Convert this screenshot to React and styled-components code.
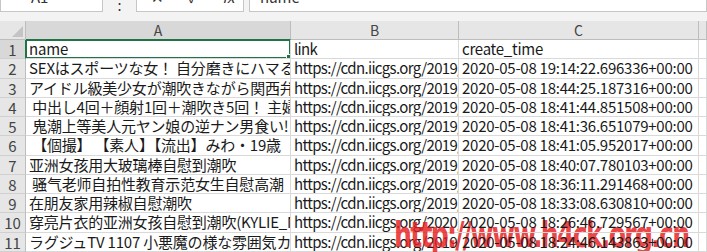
import React from 'react';
import styled, { createGlobalStyle } from 'styled-components';

const GlobalStyle = createGlobalStyle`
  html, body {
    margin: 0;
    padding: 0;
    background: #fff;
    overflow: hidden;
  }
  body {
    font-family: "Noto Sans CJK JP", "Noto Sans CJK SC", sans-serif;
  }
`;

const Page = styled.div`
  width: 707px;
  height: 252px;
  position: relative;
  overflow: hidden;
  background: #fff;
`;

const FormulaBar = styled.div`
  height: 21px;
  background: #f3f3f3;
  display: flex;
  align-items: flex-start;
  box-sizing: border-box;
`;

const BarBox = styled.div`
  width: ${props => props.width || 'auto'};
  flex: ${props => (props.grow ? 1 : 'none')};
  margin-left: ${props => props.gap || 0}px;
  height: 12px;
  background: #fff;
  border: 1px solid #c6c6c6;
  border-top: none;
  box-sizing: border-box;
  overflow: hidden;
  display: flex;
  align-items: flex-end;
  gap: 24px;
  padding: 0 0 0 ${props => props.pad || 8}px;
`;

const BarText = styled.span`
  font-size: 15px;
  line-height: 15px;
  color: #333;
  margin-bottom: 7px;
`;

const BarDots = styled.div`
  width: 33px;
  height: 12px;
  display: flex;
  justify-content: center;
  overflow: hidden;
  color: #777;
  font-size: 15px;
  line-height: 0;
`;

const Sheet = styled.div`
  display: grid;
  grid-template-columns: 26px 265px 168px 240px 1fr;
  grid-template-rows: 19px repeat(11, 19.25px);
`;

const Corner = styled.div`
  background: #e6e6e6;
  border-right: 1px solid #bdbdbd;
  border-bottom: 1px solid #bdbdbd;
  box-sizing: border-box;
  position: relative;
  &::after {
    content: '';
    position: absolute;
    right: 2px;
    bottom: 2px;
    border-style: solid;
    border-width: 0 0 11px 11px;
    border-color: transparent transparent #c4c4c4 transparent;
  }
`;

const ColHead = styled.div`
  background: ${props => (props.active ? '#d8d8d8' : '#e6e6e6')};
  border-right: 1px solid #bdbdbd;
  border-bottom: 1px solid ${props => (props.active ? '#217346' : '#bdbdbd')};
  box-sizing: border-box;
  font-size: 14px;
  line-height: 18px;
  color: #444;
  text-align: center;
`;

const RowHead = styled.div`
  background: ${props => (props.active ? '#d8d8d8' : '#e6e6e6')};
  border-right: 1px solid ${props => (props.active ? '#217346' : '#bdbdbd')};
  border-bottom: 1px solid #d0d0d0;
  box-sizing: border-box;
  font-size: 15px;
  line-height: 19px;
  color: #444;
  text-align: center;
`;

const Cell = styled.div`
  border-right: 1px solid #d9d9d9;
  border-bottom: 1px solid #d9d9d9;
  box-sizing: border-box;
  font-size: 15px;
  line-height: 18px;
  color: #1a1a1a;
  white-space: pre;
  letter-spacing: ${props => props.tight || 0}px;
  overflow: ${props => (props.spill ? 'visible' : 'hidden')};
  padding-left: 3px;
  position: relative;
  z-index: ${props => (props.spill ? 1 : 0)};
  background: ${props => (props.spill ? 'transparent' : '#fff')};

  ${props => props.selected && `
    &::after {
      content: '';
      position: absolute;
      left: -1px;
      top: -1px;
      right: -1px;
      bottom: -1px;
      border: 2px solid #217346;
      pointer-events: none;
    }
    &::before {
      content: '';
      position: absolute;
      right: -3px;
      bottom: -3px;
      width: 5px;
      height: 5px;
      background: #217346;
      border: 1px solid #fff;
      z-index: 2;
    }
  `}
`;

const Watermark = styled.div`
  position: absolute;
  left: 394px;
  top: 215px;
  font-family: "DejaVu Sans Condensed", "DejaVu Sans", sans-serif;
  font-weight: bold;
  font-size: 35px;
  letter-spacing: -2.2px;
  color: rgba(232, 28, 32, 0.84);
  white-space: nowrap;
  transform: scaleX(0.8);
  transform-origin: left top;
`;

const rows = [
  ['name', 'link', 'create_time'],
  ['SEXはスポーツな女！ 自分磨きにハマる美人OL', 'https://cdn.iicgs.org/2019/05/08/a1.mp4', '2020-05-08 19:14:22.696336+00:00'],
  ['アイドル級美少女が潮吹きながら関西弁で', 'https://cdn.iicgs.org/2019/05/08/a2.mp4', '2020-05-08 18:44:25.187316+00:00'],
  [' 中出し4回＋顔射1回＋潮吹き5回！ 主婦', 'https://cdn.iicgs.org/2019/05/08/a3.mp4', '2020-05-08 18:41:44.851508+00:00'],
  [' 鬼潮上等美人元ヤン娘の逆ナン男食い!', 'https://cdn.iicgs.org/2019/05/08/a4.mp4', '2020-05-08 18:41:36.651079+00:00'],
  [' 【個撮】 【素人】【流出】みわ・19歳 ', 'https://cdn.iicgs.org/2019/05/08/a5.mp4', '2020-05-08 18:41:05.952017+00:00'],
  ['亚洲女孩用大玻璃棒自慰到潮吹', 'https://cdn.iicgs.org/2019/05/08/a6.mp4', '2020-05-08 18:40:07.780103+00:00'],
  [' 骚气老师自拍性教育示范女生自慰高潮', 'https://cdn.iicgs.org/2019/05/08/a7.mp4', '2020-05-08 18:36:11.291468+00:00'],
  ['在朋友家用辣椒自慰潮吹', 'https://cdn.iicgs.org/2019/05/08/a8.mp4', '2020-05-08 18:33:08.630810+00:00'],
  ['穿亮片衣的亚洲女孩自慰到潮吹(KYLIE_N', 'https://cdn.iicgs.org/2020/05/08/a9.mp4', '2020-05-08 18:26:46.729567+00:00'],
  ['ラグジュTV 1107 小悪魔の様な雰囲気カ', 'https://cdn.iicgs.org/2019/05/08/b0.mp4', '2020-05-08 18:24:46.143863+00:00'],
];

function App() {
  return (
    <Page>
      <GlobalStyle />
      <FormulaBar>
        <BarBox width="103px" pad={30}><BarText>A1</BarText></BarBox>
        <BarDots><BarText>⋮</BarText></BarDots>
        <BarBox width="108px" pad={14}>
          <BarText>✕</BarText>
          <BarText>✓</BarText>
          <BarText><i>fx</i></BarText>
        </BarBox>
        <BarBox grow gap={5} pad={10}><BarText>name</BarText></BarBox>
      </FormulaBar>
      <Sheet>
        <Corner />
        <ColHead active>A</ColHead>
        <ColHead>B</ColHead>
        <ColHead>C</ColHead>
        <ColHead />
        {rows.map((row, i) => (
          <React.Fragment key={i}>
            <RowHead active={i === 0}>{i + 1}</RowHead>
            <Cell selected={i === 0} tight={-0.2}>{row[0]}</Cell>
            <Cell tight={-0.65}>{row[1]}</Cell>
            <Cell spill tight={-0.25}>{row[2]}</Cell>
            <Cell />
          </React.Fragment>
        ))}
      </Sheet>
      <Watermark>http://www.h4ck.org.cn</Watermark>
    </Page>
  );
}

export default App;
